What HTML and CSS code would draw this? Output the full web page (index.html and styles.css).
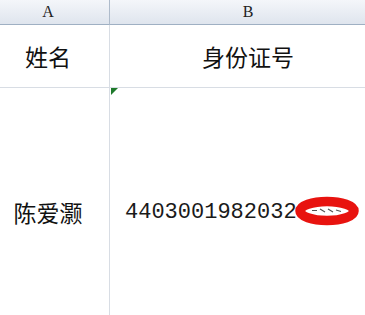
FILE: index.html
```html
<!DOCTYPE html>
<html lang="zh-CN">
<head>
  <meta charset="UTF-8" />
  <meta name="viewport" content="width=device-width, initial-scale=1.0" />
  <title>身份证号</title>
  <link rel="stylesheet" href="styles.css">
</head>
<body>

  <div class="viewport">
    <div class="sheet">
      <!-- cabeçalho das colunas -->
      <div class="col-head col-a">A</div>
      <div class="col-head">B</div>

      <div class="cell cell-a title">姓名</div>
      <div class="cell title">身份证号</div>

      <div class="cell cell-a name row-tall">陈爱灏</div>
      <div class="cell row-tall id-cell">
        <span class="flag"></span>
        <span class="id-text">4403001982032
          <svg class="scribble" width="68" height="30" viewBox="0 0 68 30">
            <ellipse cx="34" cy="15" rx="27" ry="9.5" fill="#fff" stroke="#e8130f" stroke-width="9.5"/>
            <path d="M19 14.5 h5 M27 13 l5 3 M35 13 l5 3 M43 14 l5 1.5" stroke="#555" stroke-width="1.2" fill="none"/>
          </svg>
        </span>
      </div>
    </div>
  </div>

</body>
</html>
```

FILE: styles.css
```css
:root {
  --grid-line: #d8dde4;
  --head-line: #9fb0c3;
  --text: #111;
}

* {
  box-sizing: border-box;
}

body {
  margin: 0;
  background: #fff;
  color: var(--text);
}

.viewport {
  width: 100vw;
  height: 100vh;
  overflow: hidden;
}

.sheet {
  display: grid;
  grid-template-columns: 123px 276px;
  grid-template-rows: 25px 63px 248px;
  margin-left: -13px;
  width: 399px;
}

.col-head {
  display: flex;
  align-items: center;
  justify-content: center;
  background: linear-gradient(#f4f6fa, #dfe5ee);
  border-bottom: 1px solid var(--head-line);
  font-family: "Liberation Serif", serif;
  font-size: 16px;
  color: #222;
}

.col-head.col-a {
  border-right: 1px solid #aebbcb;
}

.cell {
  display: flex;
  align-items: center;
  justify-content: center;
  border-bottom: 1px solid var(--grid-line);
  font-family: "Noto Sans CJK SC", sans-serif;
  font-size: 23px;
  position: relative;
}

.cell-a {
  border-right: 1px solid var(--grid-line);
}

.row-tall {
  border-bottom: none;
}

.id-cell {
  justify-content: flex-start;
  padding-left: 15px;
}

.id-text {
  position: relative;
  font-family: "Liberation Mono", monospace;
  font-size: 22px;
  color: #1a1a1a;
  white-space: nowrap;
}

/* marca vermelha sobre os últimos dígitos */
.scribble {
  position: absolute;
  left: 168px;
  top: 50%;
  margin-top: -16px;
  filter: blur(0.4px);
}

/* triângulo verde do canto */
.flag {
  position: absolute;
  top: 0;
  left: 1px;
  width: 0;
  height: 0;
  border-top: 7px solid #1f7a2c;
  border-right: 7px solid transparent;
}
```
